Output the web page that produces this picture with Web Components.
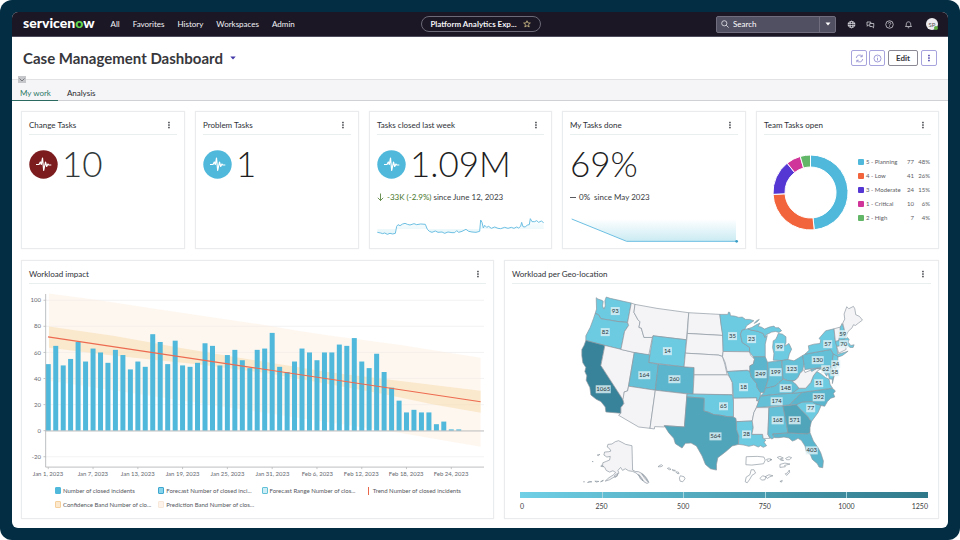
<!DOCTYPE html>
<html lang="en">
<head>
<meta charset="utf-8">
<title>Case Management Dashboard</title>
<style>
html{background:#fff}
body{margin:0;font-family:Lato,"Noto Sans",sans-serif;font-size:8px;color:#34363b}
</style>
</head>
<body>
<app-shell>
  <app-header></app-header>
  <page-title heading="Case Management Dashboard"></page-title>
  <tab-bar></tab-bar>
  <dash-grid>
    <dash-row kind="kpi">
      <dash-card heading="Change Tasks"><kpi-value color="#7c1c1f" ink="#30383a">10</kpi-value></dash-card>
      <dash-card heading="Problem Tasks"><kpi-value color="#4fb8db">1</kpi-value></dash-card>
      <dash-card heading="Tasks closed last week">
        <kpi-value color="#4fb8db">1.09M</kpi-value>
        <kpi-delta dir="down" amount="-33K (-2.9%)">since June 12, 2023</kpi-delta>
        <spark-line kind="noise"></spark-line>
      </dash-card>
      <dash-card heading="My Tasks done">
        <kpi-value>69%</kpi-value>
        <kpi-delta dir="flat" amount="0%">&nbsp;since May 2023</kpi-delta>
        <spark-line kind="fall"></spark-line>
      </dash-card>
      <dash-card heading="Team Tasks open"><donut-chart></donut-chart></dash-card>
    </dash-row>
    <dash-row kind="charts">
      <dash-card heading="Workload impact"><impact-chart></impact-chart></dash-card>
      <dash-card heading="Workload per Geo-location"><geo-map></geo-map></dash-card>
    </dash-row>
  </dash-grid>
</app-shell>
<script>
const define = (name, render) => customElements.define(name, class extends HTMLElement {
  constructor() { super(); this.attachShadow({mode: 'open'}); }
  connectedCallback() { this.shadowRoot.innerHTML = render(this); }
});
const base = `*{box-sizing:border-box}svg{display:block}button{font:inherit;color:inherit;background:none;border:0;padding:0;margin:0;display:flex;align-items:center;justify-content:center}`;
const kebab = c => `<svg width="8" height="8" viewBox="0 0 8 8" fill="${c}"><rect x="3.2" y=".8" width="1.5" height="1.5"/><rect x="3.2" y="3.3" width="1.5" height="1.5"/><rect x="3.2" y="5.8" width="1.5" height="1.5"/></svg>`;

define('app-shell', () => `<style>${base}
:host{display:flex;min-height:100vh;box-sizing:border-box;padding:12px;background:#032d42;border-radius:12px}
main{flex:1;min-width:0;display:flex;flex-direction:column;background:#fff;border-radius:6px;overflow:hidden}
::slotted(dash-grid){flex:1}
</style><main><slot></slot></main>`);

define('app-header', () => `<style>${base}
:host{display:block}
header{display:grid;grid-template-columns:1fr auto 1fr;align-items:center;height:25px;background:#1b1725;color:#f3f3f6;padding:0 10px 0 11px;border-bottom:1px solid #4d4c5c}
.left{display:flex;align-items:center;gap:16px}
.logo{font-size:14px;font-weight:900;line-height:20px;color:#fff;padding-bottom:2px}
.logo span{color:#62d84e}
nav{display:flex;gap:13px}
a{color:inherit;text-decoration:none;line-height:12px}
.pill{width:120px;height:16px;border:1px solid #6c6a78;border-radius:8px;font-weight:700;gap:6px}
.right{display:flex;align-items:center;justify-content:flex-end}
.search{display:flex;align-items:center;width:120px;height:17px;background:#514f62;border:1px solid #6f6d7e;border-radius:2px;margin-right:11px}
.search svg{flex:none;margin:0 4px}
input{flex:1;min-width:0;background:none;border:0;padding:0;font:inherit;color:#fff;outline:0}
input::placeholder{color:#fff;opacity:1}
.search button{width:16px;height:15px;border-left:1px solid #6f6d7e}
.search button svg{margin:0}
.icons{display:flex;gap:10px;align-items:center}
.icons button{width:9px;height:12px}
.avatar{width:12px;height:12px;border-radius:6px;background:#ececf0;color:#555;font-size:6px;display:flex;align-items:center;justify-content:center;margin-left:13px;position:relative}
.avatar i{position:absolute;right:0;bottom:0;width:4px;height:4px;border-radius:2px;background:#5cae42}
</style>
<header>
<div class="left"><div class="logo">servicen<span>o</span>w</div>
<nav><a href="#">All</a><a href="#">Favorites</a><a href="#">History</a><a href="#">Workspaces</a><a href="#">Admin</a></nav></div>
<button class="pill">Platform Analytics Exp...<svg width="8" height="8" viewBox="0 0 16 16" fill="none" stroke="#d6c48c" stroke-width="1.6"><path d="M8 1.5 10 6h4.700L11 9.300 12.300 14 8 11.300 3.700 14 5 9.300 1.300 6H6z"/></svg></button>
<div class="right">
<div class="search"><svg width="8" height="8" viewBox="0 0 8 8" fill="none" stroke="#e8e8ee" stroke-width=".8"><circle cx="3.300" cy="3.300" r="2.600"/><path d="M5.200 5.200 7.600 7.600"/></svg><input aria-label="Search" placeholder="Search"><button aria-label="Search scope"><svg width="6" height="4" viewBox="0 0 6 4"><path d="M.5.5h5L3 3.600z" fill="#fff"/></svg></button></div>
<div class="icons">
<button aria-label="Language"><svg width="9" height="9" viewBox="0 0 18 18" fill="none" stroke="#dcdce2" stroke-width="1.600"><circle cx="9" cy="9" r="6.500"/><ellipse cx="9" cy="9" rx="3" ry="6.500"/><path d="M1.500 6.800h15M1.500 11.200h15"/></svg></button>
<button aria-label="Chat"><svg width="9" height="9" viewBox="0 0 18 18" fill="none" stroke="#dcdce2" stroke-width="1.500"><path d="M6.500 10H5l-2.500 2.500V10H2V4h7.500v2"/><path d="M7.500 7H15.500V13h-.5v2.700L12.300 13H7.500z"/></svg></button>
<button aria-label="Help"><svg width="9" height="9" viewBox="0 0 18 18" fill="none" stroke="#dcdce2" stroke-width="1.500"><circle cx="9" cy="9" r="7.500"/><path d="M6.500 7.200C6.500 3.800 11.700 4 11.500 7c-.2 2-2.500 1.800-2.500 4M9 12.500v1.600"/></svg></button>
<button aria-label="Notifications"><svg width="9" height="9" viewBox="0 0 18 18" fill="none" stroke="#dcdce2" stroke-width="1.500"><path d="M3 13c2-1.500 1.500-4 1.800-6C5.500 2.500 12.500 2.500 13.200 7c.3 2-.2 4.500 1.800 6zM7.500 15.500h3"/></svg></button>
</div>
<div class="avatar">SP<i></i></div>
</div></header>`);

define('page-title', el => `<style>${base}
:host{display:flex;align-items:center;justify-content:space-between;height:42px;padding:0 11px}
h1{margin:0;font-size:15px;line-height:20px;font-weight:700;color:#37373c;display:flex;align-items:center;gap:7px}
.tools{display:flex;gap:2px}
.tools button{width:16px;height:16px;border:1px solid #a7a3dd;border-radius:2px}
.tools .edit{width:30px;border-color:#8b8994;font-weight:700;margin:0 1px}
</style>
<h1>${el.getAttribute('heading')}<svg width="6" height="4" viewBox="0 0 6 4"><path d="M.3.5h5.400L3 3.600z" fill="#4338a8"/></svg></h1>
<div class="tools">
<button aria-label="Refresh"><svg width="9" height="9" viewBox="0 0 18 18" fill="none" stroke="#6f69c4" stroke-width="1.300"><path d="M2.500 8A6.500 6.500 0 0 1 14 4.500M14.500 1.500v4h-4M15.500 10A6.500 6.500 0 0 1 4 13.500M3.500 16.500v-4h4"/></svg></button>
<button aria-label="Information"><svg width="9" height="9" viewBox="0 0 18 18" fill="none" stroke="#6f69c4" stroke-width="1.300"><circle cx="9" cy="9" r="7"/><path d="M9 5v1.500M9 8v5"/></svg></button>
<button class="edit">Edit</button>
<button aria-label="More">${kebab('#4338a8')}</button>
</div>`);

define('tab-bar', () => `<style>${base}
:host{display:block;box-sizing:border-box;position:relative;background:#f5f5f7;border-top:1px solid #e2e2e5;border-bottom:1px solid #cfd1d5;height:22px}
nav{display:flex;height:21px}
a{display:flex;align-items:center;padding:6px 7px 0 8px;color:#2b2b30;text-decoration:none;line-height:12px}
a+a{padding-left:9px;border-bottom:1px solid transparent}
a[aria-current]{color:#2f7a68;border-bottom:1px solid #2b6a60}
.fold{position:absolute;left:6px;top:-4px;width:8px;height:7px;background:#c6c7cb}
</style><nav><a href="#" aria-current="page">My work</a><a href="#">Analysis</a></nav>
<button class="fold" aria-label="Collapse"><svg width="8" height="6" viewBox="0 0 8 6" fill="none" stroke="#77797f"><path d="M1.500 1.500 4 4l2.500-2.500"/></svg></button>`);

define('dash-grid', () => `<style>:host{display:flex;flex-direction:column;gap:11px;padding:10px 9px 9px}::slotted([kind=charts]){flex:1}</style><slot></slot>`);

define('dash-row', () => `<style>
:host{display:grid;gap:10px}
:host([kind=kpi]){grid-template-columns:164fr 164fr 183fr 184fr 183fr}
:host([kind=charts]){grid-template-columns:473fr 435fr}
</style><slot></slot>`);

define('dash-card', el => `<style>${base}
:host{display:flex;flex-direction:column;min-width:0;box-sizing:border-box;background:#fff;border:1px solid #e9ebed;padding:0 7px 6px;box-shadow:0 0 1px #eceeef}
header{display:flex;align-items:center;justify-content:space-between;height:23px;padding:4px 4px 0 0;border-bottom:1px solid #e9eeee}
h2{margin:0;font-size:8px;line-height:12px;font-weight:400;color:#2e3036}
</style><header><h2>${el.getAttribute('heading')}</h2><button aria-label="Card menu">${kebab('#3c3e44')}</button></header><slot></slot>`);

define('kpi-value', el => `<style>${base}
:host{display:flex;align-items:center;gap:4px;height:42px;margin-top:8px;font-size:35px;line-height:40px;font-weight:300;color:${el.getAttribute('ink') || '#1d1d22'}}
svg{flex:none}
span{padding-bottom:2px}
</style>${el.hasAttribute('color') ? `<svg width="29" height="29" viewBox="0 0 29 29"><circle cx="14.500" cy="14.500" r="14.200" fill="${el.getAttribute('color')}"/><path d="M7 14.500h3l1.300-2.500 1 2.500 1.200-6.500 1.200 12.500 1.800-8.500 1.200 4.500 1.300-2.500.8 1h2.500" fill="none" stroke="#fff" stroke-width="1.200" stroke-linejoin="round"/></svg>` : ''}<span><slot></slot></span>`);

define('kpi-delta', el => `<style>${base}
:host{display:flex;align-items:center;gap:2px;margin-top:6px;line-height:12px;color:#3b3d43}
b{font-weight:400;color:${el.getAttribute('dir') === 'down' ? '#47762a' : '#2e3036'}}svg{margin-right:1px}
</style>${el.getAttribute('dir') === 'down'
  ? `<svg width="7" height="8" viewBox="0 0 7 8" fill="none" stroke="#47762a" stroke-width=".8"><path d="M3.500.5v7M.8 4.800l2.700 2.700 2.700-2.700"/></svg>`
  : `<svg width="6" height="8" viewBox="0 0 6 8" stroke="#2e3036" stroke-width=".8"><path d="M0 4.500h6"/></svg>`}<b>${el.getAttribute('amount')}</b><span><slot></slot></span>`);

define('spark-line', el => {
  const fall = el.getAttribute('kind') === 'fall';
  const line = fall ? 'M620 342 785 409H1115'
    : 'M38 382 48 384 54 386 60 384 68 388 76 385 84 387 92 385 96 364 100 359 106 362 114 357 121 355 128 358 136 360 148 356 156 359 168 357 182 358 188 373 194 379 202 382 212 378 220 382 232 381 240 385 250 381 262 383 270 383 276 377 282 382 292 379 304 373 312 379 322 381 334 382 345 379 348 345 352 352 356 369 360 361 366 367 372 364 380 370 390 366 400 370 408 371 420 367 430 370 440 367 448 370 456 366 462 369 468 364 471 352 475 365 482 366 488 360 494 359 497 341 502 350 510 350 516 347 522 352 530 348 537 353';
  return `<style>${base}:host{display:block;margin-top:10px}svg{width:100%;height:auto;overflow:visible}</style>
<svg viewBox="${fall ? '615 324 504 88' : '37 324 501 88'}"><defs><linearGradient id="g" x1="0" y1="0" x2="0" y2="1"><stop offset="0" stop-color="#58bfd8" stop-opacity="0"/><stop offset="1" stop-color="#58bfd8" stop-opacity=".32"/></linearGradient></defs>
<path d="${fall ? 'M620 342H1113V409H785Z' : line + 'V372H38Z'}" fill="url(#g)" ${fall ? '' : 'opacity=".5"'}/><path d="${line}" fill="none" stroke="#6cbfe2" stroke-width="3" stroke-linejoin="round"/>${fall ? '<circle cx="1115" cy="409" r="4" fill="#3a9cc4"/>' : ''}</svg>`;
});

define('donut-chart', () => {
  const rows = [['5 - Planning', 77, 48, '#4fb8db'], ['4 - Low', 41, 26, '#f2653c'], ['3 - Moderate', 24, 15, '#5538d4'], ['1 - Critical', 10, 6, '#d0359a'], ['2 - High', 7, 4, '#62b667']];
  const total = 159, pt = (r, a) => (r * Math.sin(a)).toFixed(2) + ' ' + (-r * Math.cos(a)).toFixed(2);
  let at = 0;
  const arcs = rows.map(([, n, , c]) => {
    const a = at / total * 2 * Math.PI, b = (at += n) / total * 2 * Math.PI, big = b - a > Math.PI ? 1 : 0;
    return `<path fill="${c}" d="M${pt(37.500, a)}A37.500 37.500 0 ${big} 1 ${pt(37.500, b)}L${pt(25.500, b)}A25.500 25.500 0 ${big} 0 ${pt(25.500, a)}Z"/>`;
  }).join('');
  return `<style>${base}
:host{display:flex;align-items:center;gap:9px;padding:7px 0 0 8px;flex:1}
svg{flex:none}
table{border-collapse:collapse;flex:1;font-size:6px;line-height:8px;color:#5b5d63;margin:0 1px 4px 0}
td,th{padding:3px 0;font-weight:400;text-align:right;white-space:nowrap;line-height:8px}
td+td{padding-left:4px;width:16px}
th{text-align:left}
th i{display:inline-block;width:6px;height:6px;margin-right:2px;vertical-align:-1px;border-radius:1px}
</style><svg width="77" height="77" viewBox="-38.500 -38.500 77 77" stroke="#fff" stroke-width="1" role="img" aria-label="Tasks by priority">${arcs}</svg>
<table>${rows.map(r => `<tr><th scope="row"><i style="background:${r[3]}"></i>${r[0]}</th><td>${r[1]}</td><td>${r[2]}%</td></tr>`).join('')}</table>`;
});

define('impact-chart', () => {
  const v = [51,65,50,55,68,53,63,60,52,62,58,47,53,49,74,68,51,69,50,49,52,67,65,50,58,62,54,48,62,63,75,49,45,53,63,60,54,60,60,66,65,71,53,48,59,45,33,23,14,16,14,14,5,7,1,1];
  const x = i => 48.3 + i * 7.480, y = n => 432 - n * 1.307;
  const days = ['Jan 1, 2023','Jan 7, 2023','Jan 13, 2023','Jan 19, 2023','Jan 25, 2023','Jan 31, 2023','Feb 6, 2023','Feb 12, 2023','Feb 18, 2023','Feb 24, 2023'];
  const ticks = [-20,0,20,40,60,80,100];
  const legend = [['Number of closed incidents','#4fb8db','#4fb8db'],['Forecast Number of closed inci...','#86d4ec','#3ea6cf'],['Forecast Range Number of clos...','#cdeef6','#62c1d6'],['Trend Number of closed incidents','',''],['Confidence Band Number of clo...','#fce9cd','#f4cf9c'],['Prediction Band Number of clos...','#fdf3ea','#f8e8da']];
  return `<style>${base}
:host{display:flex;flex-direction:column;flex:1;min-width:0}
.plot{width:100%;height:auto}
text{font-size:6px;fill:#666970}
ul{list-style:none;margin:2px 18px 0 26px;padding:0;display:grid;grid-template-columns:repeat(4,1fr);row-gap:4px;font-size:6px;line-height:10px;color:#55575d}
li{display:flex;align-items:center;gap:2px;white-space:nowrap}
li i{width:6px;height:7px;border:1px solid;border-radius:1px;flex:none}
li i.line{width:1px;height:8px;border:0;border-radius:0;background:#e8664a;margin:0 2px 0 3px}
</style><svg class="plot" viewBox="29 285 458 200" role="img" aria-label="Closed incidents per day">
${ticks.map(t => `<path d="M46 ${y(t).toFixed(1)}H485" stroke="#f0f0f1" stroke-width=".8"/>`).join('')}
<path d="M49 294.500 98 301 160 310.500 265 326 300 332 330 336.500 400 346 481.600 359V448L400 434 49 382Z" fill="#fdebdb" fill-opacity=".42"/>
<path d="M49 327.500 115 337 180 349 265 363 330 373.500 383 380 481.600 392V414L433 405.500 383 395 333 386 265 374 202 366 115 357 49 349Z" fill="#f9dfb6" fill-opacity=".6"/>
${v.map((n, i) => `<rect x="${(x(i) - 2.5).toFixed(1)}" y="${y(n).toFixed(1)}" width="5" height="${(n * 1.307).toFixed(1)}" fill="#4fb8db"/>`).join('')}
<path d="M48 338 481.600 403" stroke="#ec6a50" stroke-width="1.100"/>
<path d="M45.700 295V468.500H485M45.700 432.300H485" fill="none" stroke="#b6b7ba" stroke-width=".9"/>
${ticks.map(t => `<path d="M43.500 ${y(t).toFixed(1)}h2.200" stroke="#b6b7ba" stroke-width=".8"/><text x="41" y="${Math.round(y(t)) + 2}" text-anchor="end">${t}</text>`).join('')}
${days.map((d, i) => `<path d="M${x(i * 6).toFixed(1)} 468.500v2" stroke="#b6b7ba" stroke-width=".8"/><text x="${Math.round(x(i * 6))}" y="477" text-anchor="middle">${d}</text>`).join('')}
</svg><ul>${legend.map(([t, f, s]) => `<li>${f ? `<i style="background:${f};border-color:${s}"></i>` : '<i class="line"></i>'}${t}</li>`).join('')}</ul>`;
});

define('geo-map', () => {
  const none = '#f4f4f7', lo = '#6ccae1', mid = '#5bb6cd', hi = '#51a5ba', low2 = '#64c0d7';
  const west = [
    [lo,'M78,41 83,45 95,49 99,52 97,66 101,75 105,66 104,50 108,39 120,43 183,57 172,115 140,112 118,108 92,104 85,92 75,88 79,75Z'],
    [lo,'M75,88 85,92 92,104 118,108 140,112 172,115 175,124 163,142 152,196 104,184 47,169 47,155 60,130 70,103Z'],
    ['#38839a','M47,169 104,184 92,244 158,346 161,358 152,370 152,387 107,383 105,368 92,352 78,345 62,332 59,310 48,288 50,275 44,262 47,250 38,236 35,215 35,196 42,183Z'],
    [none,'M104,184 192,205 172,320 162,323 160,345 158,346 92,244Z'],
    [none,'M183,57 194,61 191,85 203,107 209,113 206,130 213,132 221,160 246,160 235,214 192,205 152,196 163,142 175,124 172,115Z'],
    [none,'M194,61 260,73 355,86 348,167 248,155 246,160 221,160 213,132 206,130 209,113 203,107 191,85Z'],
    [lo,'M248,155 348,167 341,248 235,235Z'],
    [low2,'M192,205 238,212 235,235 264,240 255,318 175,306Z'],
    [mid,'M264,240 341,248 371,250 368,330 255,318Z'],
    [none,'M175,306 255,318 239,432 205,428 145,393 152,387 152,370 161,358 158,346 162,323 172,320Z'],
    [none,'M255,318 350,329 342,428 282,424 283,428 253,427 252,434 239,432Z'],
    [none,'M355,86 448,91 452,120 457,154 351,148Z'],
    [none,'M351,148 457,154 458,202 456,217 445,213 430,212 345,207Z'],
    [none,'M345,207 430,212 445,213 456,217 463,240 470,272 371,272 371,250 341,248Z'],
    [none,'M371,272 472,272 480,282 485,295 486,331 368,330Z'],
    [lo,'M350,329 486,332 489,352 489,398 470,397 450,393 430,391 414,384 400,380 401,342 349,338Z'],
    [hi,'M349,338 401,342 400,380 414,384 430,391 450,393 470,397 489,398 497,402 498,435 505,455 504,480 485,485 468,500 455,510 442,520 438,540 438,557 420,553 405,540 395,515 378,485 362,476 345,477 335,491 315,478 310,462 295,445 282,424 342,428Z'],
    [none,'M145,469 155,474 166,480 185,484 187,557 195,561 205,562 218,569 228,580 236,594 230,597 221,592 208,577 198,566 187,561 175,559 165,553 157,558 151,549 143,558 146,566 139,574 128,580 118,586 105,590 116,580 130,571 136,564 128,559 118,563 108,558 104,550 97,543 98,535 108,531 118,527 120,516 110,518 101,512 103,503 116,502 122,500 118,493 111,488 113,480 125,479 135,472Z M98,590 91,592 99,587Z M86,591 78,593 74,590Z M65,592 52,594 58,591Z M43,592 40,592Z M89,510 84,514 81,512Z M67,530 68,533Z M94,542 100,547 92,546Z M133,573 142,567 141,575 134,579Z M205,570 213,579 219,590 210,583Z M214,568 224,577 233,592 223,581Z'],
    ['#fff','M263,547 268,543 274,541 277,544 272,547Z M291,552 296,550 302,555 297,556Z M305,556 315,558 311,560Z M316,562 324,563 326,568 320,567Z M330,574 341,577 344,583 337,592 329,590 327,581Z']
  ];
  const east = [
    [lo,'M28,91 52,91 54,84 58,85 60,95 72,96 85,100 95,99 105,106 117,106 130,110 108,125 103,136 95,138 90,150 95,175 106,182 117,190 117,203 38,202 36,150 32,125Z'],
    [none,'M38,202 117,203 120,213 132,225 128,240 118,245 118,262 110,258 50,262 44,235 36,217Z'],
    [lo,'M50,262 110,259 118,262 122,278 138,298 140,310 150,325 148,345 138,350 138,341 69,342 66,295 58,280Z'],
    [none,'M69,342 138,341 138,350 146,350 138,368 130,385 125,410 78,412 76,402 69,398Z'],
    [lo,'M78,412 125,410 128,430 124,450 156,450 158,461 166,468 160,473 168,484 158,489 150,484 143,488 130,482 115,486 100,482 84,480 85,455 78,435Z'],
    [lo,'M103,136 112,134 122,138 140,141 158,148 163,160 170,154 164,180 164,218 128,218 117,203 117,190 106,182 95,175 90,150 95,138Z'],
    [lo,'M112,134 124,130 136,123 148,117 143,127 152,129 162,135 176,129 190,126 195,131 205,131 213,140 205,145 195,142 183,144 175,148 167,152 163,160 158,148 140,141 122,138Z M131,118 138,110 146,106 140,113Z'],
    [lo,'M188,228 190,208 186,190 188,170 195,166 199,158 203,148 215,150 226,158 226,175 222,186 235,178 243,195 236,210 232,226 215,229Z'],
    [mid,'M128,218 164,218 170,232 173,285 165,310 160,325 150,325 140,310 138,298 122,278 118,262 118,245 128,240 132,225Z'],
    [low2,'M171,234 213,229 217,285 205,295 195,305 180,309 165,312 173,285Z'],
    [low2,'M214,229 232,226 250,230 263,222 276,214 280,240 276,258 268,268 262,280 255,288 245,290 231,289 217,283Z'],
    [low2,'M150,335 160,325 165,312 180,309 195,305 205,295 217,285 231,289 245,290 254,292 258,303 265,312 245,327 190,331 165,334Z'],
    [low2,'M146,345 150,336 190,331 245,327 275,324 258,340 237,362 138,370Z'],
    [none,'M138,370 175,370 172,450 178,462 158,463 156,450 124,450 128,430 125,410 130,385Z'],
    [low2,'M175,370 217,365 228,420 232,446 186,449 190,460 184,464 178,460 172,450Z'],
    [hi,'M217,365 258,361 270,375 290,395 302,412 298,430 298,445 290,449 232,446 228,420Z'],
    [mid,'M186,449 232,446 290,449 298,445 308,470 322,490 330,505 338,530 336,550 325,548 320,538 305,525 299,510 287,502 283,485 272,468 262,462 252,468 245,470 235,461 220,458 205,460 192,460Z'],
    [lo,'M256,361 275,353 305,352 312,358 332,362 322,385 302,412 290,395 270,375Z'],
    [mid,'M237,362 258,340 275,324 365,312 374,320 368,328 372,338 360,342 350,352 342,366 332,364 312,358 305,352 275,353 258,361Z'],
    [lo,'M245,327 265,312 285,312 300,295 308,275 318,262 332,270 344,280 355,285 358,300 365,312 275,324Z M365,283 370,276 365,298Z'],
    [none,'M245,292 255,287 262,280 268,268 280,256 283,265 300,258 318,253 330,254 318,262 308,275 300,295 285,312 265,312 256,300Z'],
    [low2,'M276,214 283,210 360,196 368,210 365,225 372,235 360,247 283,256 280,240Z'],
    [lo,'M283,210 295,198 293,185 310,180 328,178 330,168 325,163 345,140 370,134 373,165 378,185 381,210 400,205 412,201 395,214 381,219 368,210 360,196Z'],
    [lo,'M368,210 381,216 382,238 374,254 363,247 372,235 365,225Z'],
    [lo,'M300,256 357,247 362,270 370,272 366,285 356,284 352,266 348,276 340,264 330,254 318,253 303,262Z'],
    [lo,'M357,247 363,247 370,270 362,270Z'],
    [none,'M370,134 392,128 388,150 384,170 374,172Z'],
    [lo,'M388,130 394,118 400,135 406,155 402,165 384,170 388,150Z'],
    [lo,'M374,172 402,165 410,160 415,166 412,174 420,184 430,182 427,190 418,190 408,181 378,187Z'],
    [none,'M378,187 404,182 406,196 384,207Z'],
    [none,'M396,117 402,105 400,90 408,68 414,74 428,67 432,74 435,92 446,97 455,108 443,117 434,124 428,122 424,131 412,142 406,155 402,142Z'],
    ['#fff','M107,517 140,516 160,518 164,527 159,538 124,542 106,541Z M168,525 176,523 182,527 172,532Z M179,524 184,526Z M200,519 208,516 218,521 207,524Z M209,526 219,528Z M225,522 235,517 243,520 236,526 228,526Z M208,540 223,536 238,539 222,543 224,547 208,549Z M122,556 130,556 135,566 124,573 118,584 110,595 104,592 107,578 118,571Z M148,582 156,574 166,577 163,586 154,587Z M165,576 175,571 187,574 178,577 170,582Z M224,568 230,566 236,557 237,564 228,573Z M208,591 215,588 213,593Z']
  ];
  const p = ([f, d]) => `<path fill="${f}" d="${d}"/>`;
  const labels = [[615,312,93],[605,333,82],[603,390,1065],[667,352,14],[644,376,164],[674,380,260],[723,407,65],[715,437,564],[732,337,35],[751,340,23],[779,348,99],[760,375,249],[775,373,199],[791,370,123],[743,388,18],[785,389,148],[776,402,174],[777,421,168],[794,421,571],[746,435,28],[811,451,403],[810,409,77],[818,398,392],[818,384,51],[817,361,130],[827,345,57],[842,335,59],[843,345,70],[835,365,24],[825,370,62],[834,373,58]];
  return `<style>${base}
:host{display:flex;flex-direction:column;flex:1;min-width:0}
.map{width:100%;height:auto}
text{font-size:6px;fill:#26343a;text-anchor:middle}
.scale{margin:5px 3px 0 8px}
.ramp{display:grid;grid-template-columns:repeat(5,1fr);height:6px;background:linear-gradient(90deg,#6fd0e6,#2f7889)}
.ramp i+i{border-left:1px solid #a5d3de}
ol{list-style:none;margin:3px 0 0;padding:0;display:grid;grid-template-columns:1fr repeat(4,2fr) 1fr;font-size:7px;line-height:10px;color:#3c3e44}
li{text-align:center}li:first-child{text-align:left}li:last-child{text-align:right}
</style><svg class="map" viewBox="512 285 418 202" role="img" aria-label="Workload by state">
<g transform="translate(570 285) scale(.3333)" stroke="#8b969f" stroke-width="2" stroke-linejoin="round">${west.map(p).join('')}<g transform="translate(420 0)">${east.map(p).join('')}</g></g>
${labels.map(([x, y, n]) => { const w = String(n).length * 3 + 3; return `<rect x="${x - w / 2}" y="${y - 4}" width="${w}" height="8" fill="#e2f2f6" fill-opacity=".78"/><text x="${x}" y="${y + 2}">${n}</text>`; }).join('')}
</svg><div class="scale"><div class="ramp"><i></i><i></i><i></i><i></i><i></i></div><ol><li>0</li><li>250</li><li>500</li><li>750</li><li>1000</li><li>1250</li></ol></div>`;
});
</script>
</body>
</html>
